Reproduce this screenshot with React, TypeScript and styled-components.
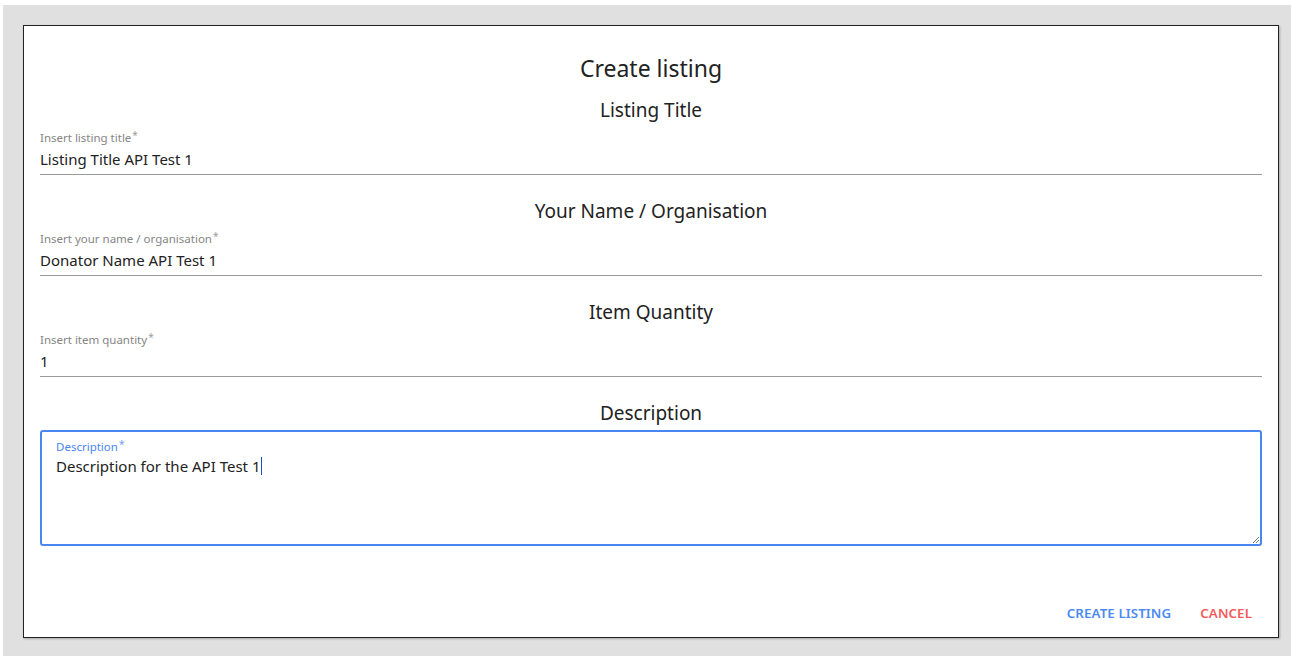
import styled, { createGlobalStyle } from "styled-components";

const GlobalStyle = createGlobalStyle`
  html, body {
    margin: 0;
    padding: 0;
    background: #ffffff;
  }
  body {
    font-family: "Noto Sans", "Open Sans", sans-serif;
    color: #222;
  }
`;

const Backdrop = styled.div`
  margin: 5px 0 0 3px;
  padding: 20px 12px 18px 20px;
  background: #e0e0e0;
  min-height: 613px;
`;

const Dialog = styled.div`
  box-sizing: border-box;
  width: 1256px;
  height: 613px;
  background: #fff;
  border: 1px solid #222;
  box-shadow: 1px 1px 2px rgba(0, 0, 0, 0.25);
  padding: 26px 16px 0;
  display: flex;
  flex-direction: column;
`;

const Title = styled.h2`
  margin: 0;
  font-size: 23px;
  line-height: 32px;
  font-weight: 400;
  text-align: center;
  color: #222;
`;

const Section = styled.section<{ $first?: boolean }>`
  display: flex;
  flex-direction: column;
  margin-top: ${({ $first }) => ($first ? "12px" : "22px")};
`;

const Heading = styled.h3`
  margin: 0 0 6px;
  font-size: 19px;
  line-height: 28px;
  font-weight: 400;
  text-align: center;
  color: #222;
`;

const Field = styled.div`
  display: flex;
  flex-direction: column;
  border-bottom: 1px solid #9a9a9a;
  padding-bottom: 3px;
`;

const Label = styled.label<{ $focused?: boolean }>`
  font-size: 11.5px;
  line-height: 16px;
  color: ${({ $focused }) => ($focused ? "#4a86f0" : "#858585")};

  sup {
    font-size: 10px;
    vertical-align: top;
    position: relative;
    top: -3px;
    margin-left: 1px;
    opacity: 0.8;
  }
`;

const Value = styled.div<{ $tight?: boolean }>`
  margin-top: ${({ $tight }) => ($tight ? "0" : "2px")};
  font-size: 15px;
  line-height: 23px;
  color: #222;
`;

const AreaBox = styled.div`
  position: relative;
  box-sizing: border-box;
  margin-top: -3px;
  height: 116px;
  border: 2px solid #4a86f0;
  border-radius: 3px;
  padding: 7px 14px;
  display: flex;
  flex-direction: column;
`;

const Caret = styled.span`
  display: inline-block;
  width: 1px;
  height: 18px;
  background: #1a4fd0;
  vertical-align: -3px;
  margin-left: 1px;
`;

const Grip = styled.svg`
  position: absolute;
  right: 0;
  bottom: 0;
`;

const Actions = styled.div`
  margin-top: auto;
  display: flex;
  justify-content: flex-end;
  align-items: center;
  gap: 29px;
  padding: 0 10px 15px 0;
`;

const ActionButton = styled.button<{ $tone: "primary" | "danger" }>`
  border: none;
  background: none;
  padding: 0;
  font-family: inherit;
  font-size: 13.3px;
  font-weight: 600;
  line-height: 18px;
  letter-spacing: 0.1px;
  text-transform: uppercase;
  color: ${({ $tone }) => ($tone === "primary" ? "#4a8af4" : "#f55a5a")};
  cursor: pointer;
`;

const fields = [
  { heading: "Listing Title", label: "Insert listing title", value: "Listing Title API Test 1" },
  { heading: "Your Name / Organisation", label: "Insert your name / organisation", value: "Donator Name API Test 1" },
  { heading: "Item Quantity", label: "Insert item quantity", value: "1" },
];

export default function App() {
  return (
    <>
      <GlobalStyle />
      <Backdrop>
        <Dialog>
          <Title>Create listing</Title>
          {fields.map((f, i) => (
            <Section key={f.heading} $first={i === 0}>
              <Heading>{f.heading}</Heading>
              <Field>
                <Label>
                  {f.label}
                  <sup>*</sup>
                </Label>
                <Value>{f.value}</Value>
              </Field>
            </Section>
          ))}
          <Section>
            <Heading>Description</Heading>
            <AreaBox>
              <Label $focused>
                Description
                <sup>*</sup>
              </Label>
              <Value $tight>
                Description for the API Test 1<Caret />
              </Value>
              <Grip width="8" height="8" viewBox="0 0 8 8">
                <path d="M7 1 L1 7 M7 4 L4 7" stroke="#777" strokeWidth="1" />
              </Grip>
            </AreaBox>
          </Section>
          <Actions>
            <ActionButton $tone="primary">Create listing</ActionButton>
            <ActionButton $tone="danger">Cancel</ActionButton>
          </Actions>
        </Dialog>
      </Backdrop>
    </>
  );
}
